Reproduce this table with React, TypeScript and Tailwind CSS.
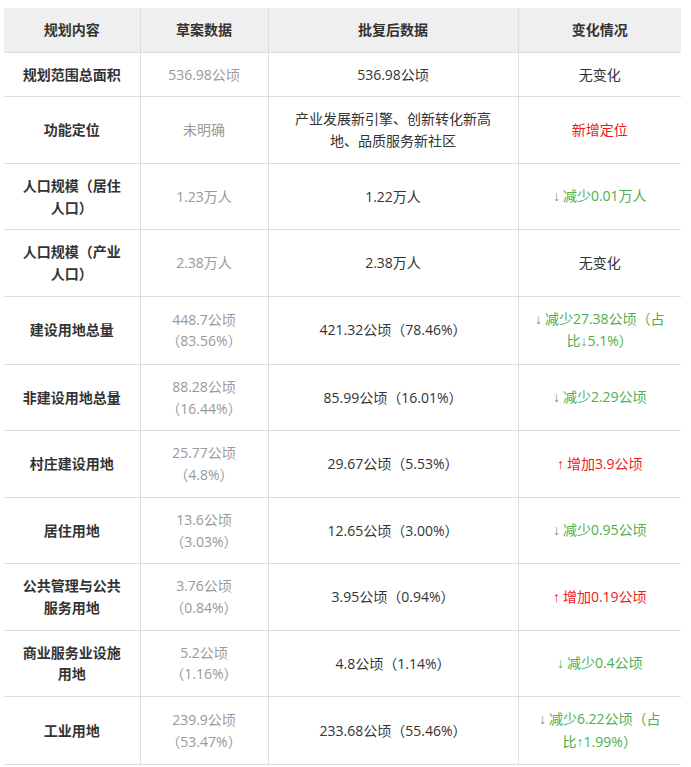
type Tone = "plain" | "up" | "down" | "new";

type Row = {
  item: string;
  draft: string;
  approved: string;
  arrow?: string;
  change: string;
  tone: Tone;
};

const rows: Row[] = [
  { item: "规划范围总面积", draft: "536.98公顷", approved: "536.98公顷", change: "无变化", tone: "plain" },
  { item: "功能定位", draft: "未明确", approved: "产业发展新引擎、创新转化新高地、品质服务新社区", change: "新增定位", tone: "new" },
  { item: "人口规模（居住人口）", draft: "1.23万人", approved: "1.22万人", arrow: "↓", change: "减少0.01万人", tone: "down" },
  { item: "人口规模（产业人口）", draft: "2.38万人", approved: "2.38万人", change: "无变化", tone: "plain" },
  { item: "建设用地总量", draft: "448.7公顷（83.56%）", approved: "421.32公顷（78.46%）", arrow: "↓", change: "减少27.38公顷（占比↓5.1%）", tone: "down" },
  { item: "非建设用地总量", draft: "88.28公顷（16.44%）", approved: "85.99公顷（16.01%）", arrow: "↓", change: "减少2.29公顷", tone: "down" },
  { item: "村庄建设用地", draft: "25.77公顷（4.8%）", approved: "29.67公顷（5.53%）", arrow: "↑", change: "增加3.9公顷", tone: "up" },
  { item: "居住用地", draft: "13.6公顷（3.03%）", approved: "12.65公顷（3.00%）", arrow: "↓", change: "减少0.95公顷", tone: "down" },
  { item: "公共管理与公共服务用地", draft: "3.76公顷（0.84%）", approved: "3.95公顷（0.94%）", arrow: "↑", change: "增加0.19公顷", tone: "up" },
  { item: "商业服务业设施用地", draft: "5.2公顷（1.16%）", approved: "4.8公顷（1.14%）", arrow: "↓", change: "减少0.4公顷", tone: "down" },
  { item: "工业用地", draft: "239.9公顷（53.47%）", approved: "233.68公顷（55.46%）", arrow: "↓", change: "减少6.22公顷（占比↑1.99%）", tone: "down" },
];

const toneClass: Record<Tone, string> = {
  plain: "text-[#333]",
  up: "text-[#f01818]",
  new: "text-[#f01818]",
  down: "text-[#4caf50]",
};

// arrows inside the text use a narrow latin font, like the source page
function withArrows(text: string) {
  return text.split(/([↑↓])/).map((part, i) =>
    part === "↑" || part === "↓" ? (
      <span key={i} className="font-['Liberation_Sans']">
        {part}
      </span>
    ) : (
      part
    )
  );
}

export default function App() {
  return (
    <div
      className="min-h-screen bg-white pt-2 pl-1 pr-[10px]"
      style={{ fontFamily: '"Open Sans", "Noto Sans CJK SC", sans-serif' }}
    >
      <table className="w-[677px] table-fixed border-collapse text-center text-[14px] leading-[21.7px]">
        <colgroup>
          <col className="w-[136px]" />
          <col className="w-[128px]" />
          <col className="w-[250px]" />
          <col className="w-[163px]" />
        </colgroup>
        <thead>
          <tr className="bg-[#efefef] font-bold text-[#333]">
            <th className="border-r border-b border-[#dedede] px-4 py-[11px]">规划内容</th>
            <th className="border-r border-b border-[#dedede] px-3 py-[11px]">草案数据</th>
            <th className="border-r border-b border-[#dedede] px-6 py-[11px]">批复后数据</th>
            <th className="border-b border-[#dedede] px-4 py-[11px]">变化情况</th>
          </tr>
        </thead>
        <tbody>
          {rows.map((r) => (
            <tr key={r.item}>
              <td className="border-r border-b border-[#dedede] px-4 py-[11px] font-bold text-[#333]">
                {r.item}
              </td>
              <td className="border-r border-b border-[#dedede] px-3 py-[11px] text-[#999]">
                {r.draft}
              </td>
              <td className="border-r border-b border-[#dedede] px-6 py-[11px] text-[#333]">
                {r.approved}
              </td>
              <td className={`border-b border-[#dedede] px-[14px] py-[11px] ${toneClass[r.tone]}`}>
                {r.arrow && <span className="font-['Liberation_Sans'] mr-[3px]">{r.arrow}</span>}
                {withArrows(r.change)}
              </td>
            </tr>
          ))}
        </tbody>
      </table>
    </div>
  );
}
